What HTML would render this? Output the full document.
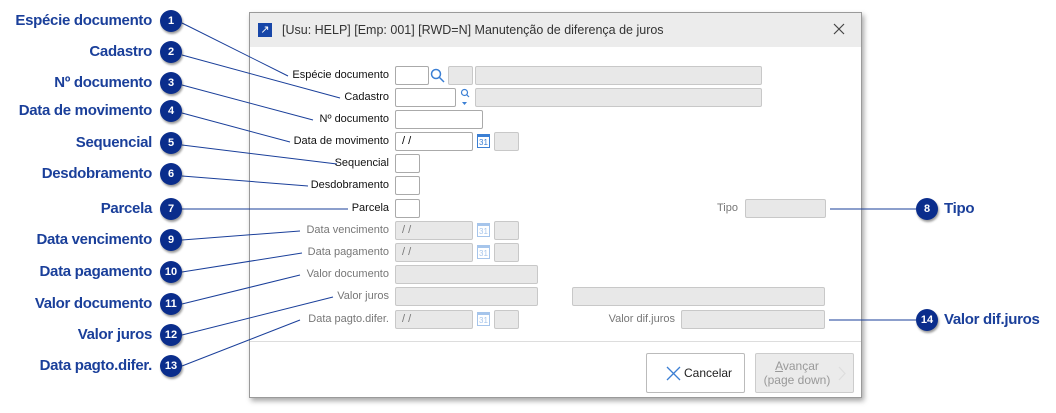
<!DOCTYPE html><html><head><style>
body{margin:0;width:1056px;height:413px;background:#fff;position:relative;overflow:hidden;font-family:"Liberation Sans",sans-serif}
.a{position:absolute}
.win{left:249px;top:12px;width:611px;height:384px;border:1px solid #9a9a9a;background:#fff;box-shadow:2px 3px 5px rgba(0,0,0,.35)}
.tb{left:0;top:0;width:611px;height:34px;background:#ececec}
.lb{font-size:11px;color:#111;text-align:right;width:150px}
.dl{color:#777}
.in{height:19px;border:1px solid #aaa;background:#fff;border-radius:2px;box-sizing:border-box;font-size:11px;padding-left:6px;line-height:17px}
.g{background:#e8e8e8;border-color:#c8c8c8}
.cl{font-size:15px;font-weight:bold;color:#1a3f9a;text-align:right;width:150px;left:2px;letter-spacing:-0.3px}
.c{width:22px;height:22px;border-radius:50%;background:#0a2d8c;color:#fff;font-size:11px;font-weight:bold;text-align:center;line-height:22px;box-shadow:1px 2px 2px rgba(0,0,0,.4)}
.cal{width:13px;height:14px;border:1.5px solid #3b7fd4;box-sizing:border-box;font-size:8px;color:#3b7fd4;text-align:center;line-height:11px;border-top-width:3px}
.cald{opacity:.45}
</style></head><body>
<div class="a win">
<div class="a tb"></div>
<div class="a" style="left:8px;top:10px;width:14px;height:14px;background:#1746a8;color:#fff;font-size:11px;line-height:14px;text-align:center">&#8599;</div>
<div class="a" style="left:32px;top:10px;font-size:12.5px;color:#333">[Usu: HELP] [Emp: 001] [RWD=N] Manutenção de diferença de juros</div>
<svg class="a" style="left:583px;top:10px" width="12" height="12"><path d="M1 1L11 11M11 1L1 11" stroke="#444" stroke-width="1.2"/></svg>
<div class="a" style="left:0;top:328px;width:611px;height:1px;background:#ddd"></div>
<div class="a" style="left:396px;top:340px;width:97px;height:38px;border:1px solid #bbb;border-radius:2px;font-size:12px;color:#222"><svg style="position:absolute;left:19px;top:12px" width="15" height="15"><path d="M1 1L14 14M14 1L1 14" stroke="#3b7fd4" stroke-width="1.3"/></svg><span style="position:absolute;left:37px;top:12px">Cancelar</span></div>
<div class="a" style="left:505px;top:340px;width:97px;height:38px;border:1px solid #ccc;background:#ebebeb;border-radius:2px;font-size:12px;color:#999;text-align:center;line-height:14px"><div style="position:absolute;left:6px;top:5px;width:70px"><u>A</u>vançar<br>(page down)</div><svg style="position:absolute;left:82px;top:12px" width="8" height="15"><path d="M1 1L7 7.5L1 14" stroke="#ddd" stroke-width="1.2" fill="none"/></svg></div>
</div>

<svg class="a" style="left:0;top:0" width="1056" height="413"><g stroke="#1a3f9a" stroke-width="1" fill="none">
<line x1="182" y1="23" x2="288" y2="76"/><line x1="182" y1="55" x2="340" y2="98"/><line x1="182" y1="85" x2="313" y2="120"/><line x1="182" y1="113" x2="290" y2="142"/><line x1="182" y1="145" x2="337" y2="164"/><line x1="182" y1="176" x2="308" y2="186"/><line x1="182" y1="209" x2="348" y2="209"/><line x1="182" y1="240" x2="300" y2="231"/><line x1="182" y1="272" x2="302" y2="253"/><line x1="182" y1="304" x2="300" y2="275"/><line x1="182" y1="335" x2="333" y2="297"/><line x1="182" y1="366" x2="300" y2="320"/><line x1="830" y1="209" x2="916" y2="209"/><line x1="829" y1="320" x2="916" y2="320"/></g></svg>

<div class="a lb" style="left:239px;top:69px">Espécie documento</div>
<div class="a lb" style="left:239px;top:91px">Cadastro</div>
<div class="a lb" style="left:239px;top:113px">Nº documento</div>
<div class="a lb" style="left:239px;top:135px">Data de movimento</div>
<div class="a lb" style="left:239px;top:157px">Sequencial</div>
<div class="a lb" style="left:239px;top:179px">Desdobramento</div>
<div class="a lb" style="left:239px;top:202px">Parcela</div>
<div class="a lb dl" style="left:588px;top:202px">Tipo</div>
<div class="a lb dl" style="left:239px;top:224px">Data vencimento</div>
<div class="a lb dl" style="left:239px;top:246px">Data pagamento</div>
<div class="a lb dl" style="left:239px;top:268px">Valor documento</div>
<div class="a lb dl" style="left:239px;top:290px">Valor juros</div>
<div class="a lb dl" style="left:239px;top:313px">Data pagto.difer.</div>
<div class="a lb dl" style="left:525px;top:313px">Valor dif.juros</div>

<div class="a in" style="left:395px;top:66px;width:34px"></div>
<svg class="a" style="left:430px;top:68px" width="15" height="15"><circle cx="6" cy="6" r="4.5" stroke="#3b7fd4" stroke-width="1.5" fill="none"/><line x1="9.5" y1="9.5" x2="14" y2="14" stroke="#3b7fd4" stroke-width="1.5"/></svg>
<div class="a in g" style="left:448px;top:66px;width:25px"></div>
<div class="a in g" style="left:475px;top:66px;width:287px"></div>
<div class="a in" style="left:395px;top:88px;width:61px"></div>
<svg class="a" style="left:460px;top:88px" width="10" height="18"><circle cx="4.5" cy="4.5" r="3" stroke="#3b7fd4" stroke-width="1.2" fill="none"/><line x1="6.5" y1="6.5" x2="9" y2="9" stroke="#3b7fd4" stroke-width="1.2"/><path d="M2 14 L7 14 L4.5 17z" fill="#3b7fd4"/></svg>
<div class="a in g" style="left:475px;top:88px;width:287px"></div>
<div class="a in" style="left:395px;top:110px;width:88px"></div>
<div class="a in" style="left:395px;top:132px;width:78px">/ /</div>
<div class="a cal" style="left:477px;top:134px">31</div>
<div class="a in g" style="left:494px;top:132px;width:25px"></div>
<div class="a in" style="left:395px;top:154px;width:25px"></div>
<div class="a in" style="left:395px;top:176px;width:25px"></div>
<div class="a in" style="left:395px;top:199px;width:25px"></div>
<div class="a in g" style="left:745px;top:199px;width:81px"></div>
<div class="a in g" style="left:395px;top:221px;width:78px;color:#777">/ /</div>
<div class="a cal cald" style="left:477px;top:223px">31</div>
<div class="a in g" style="left:494px;top:221px;width:25px"></div>
<div class="a in g" style="left:395px;top:243px;width:78px;color:#777">/ /</div>
<div class="a cal cald" style="left:477px;top:245px">31</div>
<div class="a in g" style="left:494px;top:243px;width:25px"></div>
<div class="a in g" style="left:395px;top:265px;width:143px"></div>
<div class="a in g" style="left:395px;top:287px;width:143px"></div>
<div class="a in g" style="left:572px;top:287px;width:253px"></div>
<div class="a in g" style="left:395px;top:310px;width:78px;color:#777">/ /</div>
<div class="a cal cald" style="left:477px;top:312px">31</div>
<div class="a in g" style="left:494px;top:310px;width:25px"></div>
<div class="a in g" style="left:681px;top:310px;width:144px"></div>

<div class="a cl" style="top:12px">Espécie documento</div><div class="a c" style="left:160px;top:10px">1</div>
<div class="a cl" style="top:43px">Cadastro</div><div class="a c" style="left:160px;top:41px">2</div>
<div class="a cl" style="top:74px">Nº documento</div><div class="a c" style="left:160px;top:72px">3</div>
<div class="a cl" style="top:102px">Data de movimento</div><div class="a c" style="left:160px;top:100px">4</div>
<div class="a cl" style="top:134px">Sequencial</div><div class="a c" style="left:160px;top:132px">5</div>
<div class="a cl" style="top:165px">Desdobramento</div><div class="a c" style="left:160px;top:163px">6</div>
<div class="a cl" style="top:200px">Parcela</div><div class="a c" style="left:160px;top:198px">7</div>
<div class="a cl" style="top:231px">Data vencimento</div><div class="a c" style="left:160px;top:229px">9</div>
<div class="a cl" style="top:263px">Data pagamento</div><div class="a c" style="left:160px;top:261px">10</div>
<div class="a cl" style="top:295px">Valor documento</div><div class="a c" style="left:160px;top:293px">11</div>
<div class="a cl" style="top:326px">Valor juros</div><div class="a c" style="left:160px;top:324px">12</div>
<div class="a cl" style="top:357px">Data pagto.difer.</div><div class="a c" style="left:160px;top:355px">13</div>
<div class="a c" style="left:916px;top:198px">8</div><div class="a cl" style="left:944px;top:200px;text-align:left">Tipo</div>
<div class="a c" style="left:916px;top:309px">14</div><div class="a cl" style="left:944px;top:311px;text-align:left">Valor dif.juros</div>
</body></html>
